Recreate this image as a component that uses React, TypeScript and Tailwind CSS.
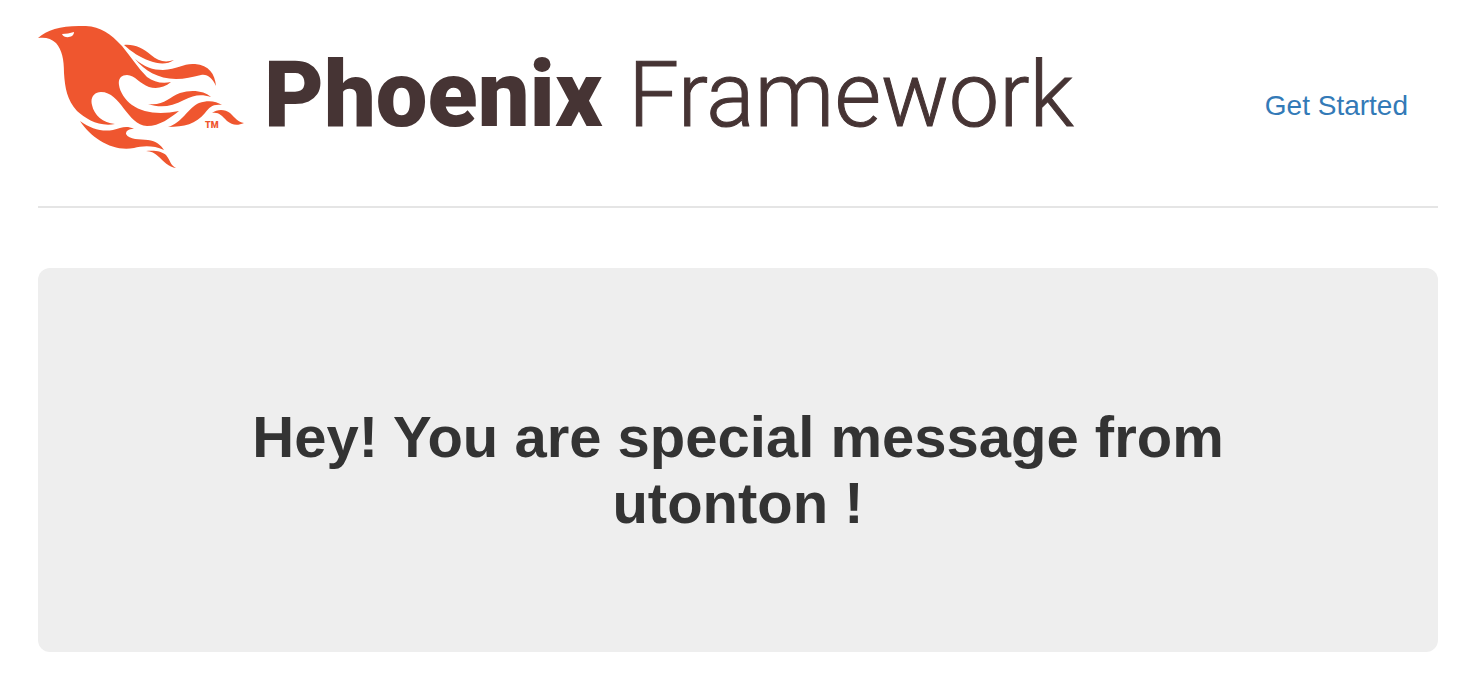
function PhoenixBird() {
  return (
    <svg
      viewBox="38 26 206 142"
      className="w-[206px] h-[142px] shrink-0"
      fill="#ef562f"
      aria-hidden="true"
    >
      {/* head, body and the two long wing feathers */}
      <path
        fillRule="evenodd"
        d="M38 38C47 30 60 26 79 26C98 25 109 32 122 46C131 57 138 68 147 77C154 82 162 84 171 82C164 88 156 89 149 87C140 84 135 75 127 75C121 75 118 79 119 85C120 92 125 100 132 105C143 113 160 115 179 111C170 118 160 126 147 126C127 125 121 92 101 92C94 92 90 98 92 105C94 115 103 123 115 124C99 127 86 119 77 111C67 100 65 88 64 73C64 59 62 50 56 43C51 38 45 37 38 38Z
        M62 34C66 34 70 33 74 32C74 38 64 39 62 34Z"
      />
      <path d="M124 45C134 44 143 48 151 55C158 61 165 63 174 60C167 65 158 64 150 61C139 57 132 52 124 45Z" />
      <path d="M135 59C144 67 153 70 163 70C178 69 184 63 195 64C209 65 215 74 216 86C212 78 208 74 201 75C192 77 185 79 176 79C158 79 144 70 135 59Z" />
      <path d="M148 104C164 106 169 97 180 93C192 89 205 91 211 97C201 94 194 95 184 100C171 107 160 108 148 104Z" />
      <path d="M168 127C182 123 188 108 199 103C208 100 216 101 222 105C212 104 210 107 205 113C196 124 184 127 168 127Z" />
      <path d="M212 113C217 109 225 109 230 113C235 118 238 122 244 123C237 126 232 125 227 121C221 115 219 112 212 113Z" />
      <path d="M80 121C91 129 102 132 113 130C121 128 126 125 134 129C128 129 126 131 126 134C129 140 140 139 148 140C156 141 161 145 164 150C153 145 142 146 134 148C113 152 92 139 80 121Z" />
      <path d="M146 151C154 150 162 151 166 155C171 161 170 165 176 168C169 167 163 161 159 157C155 153 151 151 146 151Z" />
      <text
        x="205"
        y="128"
        fontFamily="Roboto, sans-serif"
        fontSize="9"
        fontWeight="900"
      >
        TM
      </text>
    </svg>
  );
}

export default function App() {
  return (
    <div className="bg-white pt-[26px] pb-10 pl-[38px] pr-[42px] font-['Liberation_Sans',Arial,sans-serif] text-[#333333]">
      <header className="flex items-start justify-between pb-[38px] border-b-2 border-[#e5e5e5]">
        <div className="flex items-start gap-5">
          <PhoenixBird />
          <div className="flex items-baseline gap-[26px] pt-[13px] leading-[112px] text-[#463434] font-[Roboto,sans-serif] whitespace-nowrap">
            <span className="text-[92px] font-black">Phoenix</span>
            <span className="text-[90px] font-light [-webkit-text-stroke:1px_#463434]">
              Framework
            </span>
          </div>
        </div>
        <nav className="pt-[60px] pr-[30px]">
          <a href="#" className="text-[28px] leading-10 text-[#337ab7] whitespace-nowrap">
            Get Started
          </a>
        </nav>
      </header>

      <main className="mt-[60px] rounded-xl bg-[#eeeeee] px-[120px] pt-[136px] pb-[116px] text-center">
        <h2 className="mx-auto max-w-[1160px] text-[58px] leading-[66px] font-bold">
          Hey! You are special message from utonton !
        </h2>
      </main>
    </div>
  );
}
